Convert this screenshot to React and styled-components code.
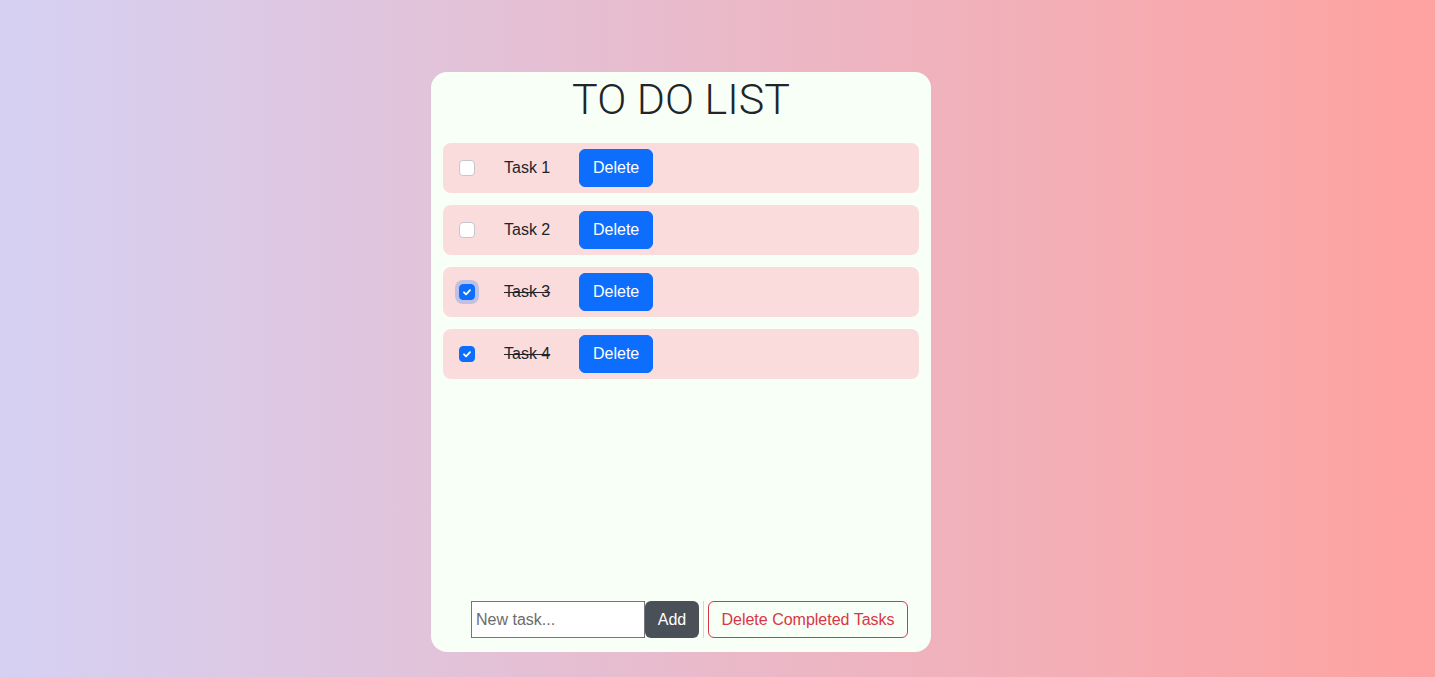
import React, { useState } from 'react';
import styled, { createGlobalStyle } from 'styled-components';

const GlobalStyle = createGlobalStyle`
  * { box-sizing: border-box; }
  html, body {
    margin: 0;
    padding: 0;
  }
  body {
    font-family: "Liberation Sans", Arial, sans-serif;
    color: #212529;
    background: linear-gradient(90deg, #d5d1f3 0%, #fea2a0 100%);
    min-height: 100vh;
  }
`;

const Page = styled.div`
  min-height: 677px;
  display: flex;
  justify-content: center;
  padding: 72px 73px 0 0;
`;

const Card = styled.div`
  width: 500px;
  height: 580px;
  background: #f7fff7;
  border-radius: 16px;
  padding: 0 12px 14px 12px;
  display: flex;
  flex-direction: column;
`;

const Title = styled.h1`
  margin: 0;
  height: 71px;
  padding-top: 2px;
  text-align: center;
  font-family: Roboto, "Liberation Sans", sans-serif;
  font-weight: 300;
  font-size: 43px;
  line-height: 50px;
  color: #212529;
`;

const List = styled.div`
  display: flex;
  flex-direction: column;
  gap: 12px;
  flex: 1;
`;

const Row = styled.div`
  display: flex;
  align-items: center;
  height: 50px;
  padding: 0 16px;
  background: #fbdcdc;
  border-radius: 8px;
`;

const Check = styled.button`
  width: 16px;
  height: 16px;
  padding: 0;
  margin: 0 29px 0 0;
  border-radius: 4px;
  border: 1px solid ${p => (p.$checked ? '#0d6efd' : '#c4c8cc')};
  background: ${p => (p.$checked ? '#0d6efd' : '#fff')};
  box-shadow: ${p => (p.$focus ? '0 0 0 4px rgba(13,110,253,0.25)' : 'none')};
  display: flex;
  align-items: center;
  justify-content: center;
  cursor: pointer;
`;

const TaskText = styled.span`
  width: 75px;
  font-size: 16px;
  color: #212529;
  text-decoration: ${p => (p.$done ? 'line-through' : 'none')};
`;

const DeleteBtn = styled.button`
  height: 38px;
  padding: 0 13px;
  font-family: "Liberation Sans", Arial, sans-serif;
  font-size: 16px;
  color: #fff;
  background: #0d6efd;
  border: 1px solid #0d6efd;
  border-radius: 6px;
  cursor: pointer;
`;

const Footer = styled.div`
  display: flex;
  align-items: stretch;
  height: 37px;
  padding-left: 28px;
`;

const Input = styled.input`
  width: 174px;
  height: 37px;
  padding: 0 4px;
  font-family: "Liberation Sans", Arial, sans-serif;
  font-size: 16px;
  border: 1px solid #767676;
  border-radius: 0;
  background: #fff;
  outline: none;
  &::placeholder {
    color: #6c6c6c;
  }
`;

const AddBtn = styled.button`
  width: 54px;
  font-family: "Liberation Sans", Arial, sans-serif;
  font-size: 16px;
  color: #fff;
  background: #495057;
  border: none;
  border-radius: 6px;
  cursor: pointer;
`;

const Divider = styled.div`
  width: 1px;
  background: #d4d7d9;
  margin: 0 4px;
`;

const OutlineDanger = styled.button`
  width: 200px;
  font-family: "Liberation Sans", Arial, sans-serif;
  font-size: 16px;
  color: #dc3545;
  background: transparent;
  border: 1px solid #dc3545;
  border-radius: 6px;
  cursor: pointer;
`;

const CheckMark = () => (
  <svg width="12" height="12" viewBox="0 0 20 20">
    <path d="M5 10.5l3.5 3.5 6.5-7" fill="none" stroke="#fff" strokeWidth="3" strokeLinecap="round" strokeLinejoin="round" />
  </svg>
);

const initialTasks = [
  { id: 1, text: 'Task 1', done: false },
  { id: 2, text: 'Task 2', done: false },
  { id: 3, text: 'Task 3', done: true },
  { id: 4, text: 'Task 4', done: true },
];

const App = () => {
  const [tasks, setTasks] = useState(initialTasks);
  const [focused, setFocused] = useState(3);
  const [draft, setDraft] = useState('');

  const toggle = (id) => {
    setFocused(id);
    setTasks(tasks.map(t => (t.id === id ? { ...t, done: !t.done } : t)));
  };

  const remove = (id) => setTasks(tasks.filter(t => t.id !== id));

  const add = () => {
    if (!draft.trim()) return;
    setTasks([...tasks, { id: Date.now(), text: draft.trim(), done: false }]);
    setDraft('');
  };

  return (
    <>
      <GlobalStyle />
      <Page>
        <Card>
          <Title>TO DO LIST</Title>
          <List>
            {tasks.map(t => (
              <Row key={t.id}>
                <Check $checked={t.done} $focus={focused === t.id} onClick={() => toggle(t.id)}>
                  {t.done && <CheckMark />}
                </Check>
                <TaskText $done={t.done}>{t.text}</TaskText>
                <DeleteBtn onClick={() => remove(t.id)}>Delete</DeleteBtn>
              </Row>
            ))}
          </List>
          <Footer>
            <Input placeholder="New task..." value={draft} onChange={e => setDraft(e.target.value)} />
            <AddBtn onClick={add}>Add</AddBtn>
            <Divider />
            <OutlineDanger onClick={() => setTasks(tasks.filter(t => !t.done))}>
              Delete Completed Tasks
            </OutlineDanger>
          </Footer>
        </Card>
      </Page>
    </>
  );
};

export default App;
